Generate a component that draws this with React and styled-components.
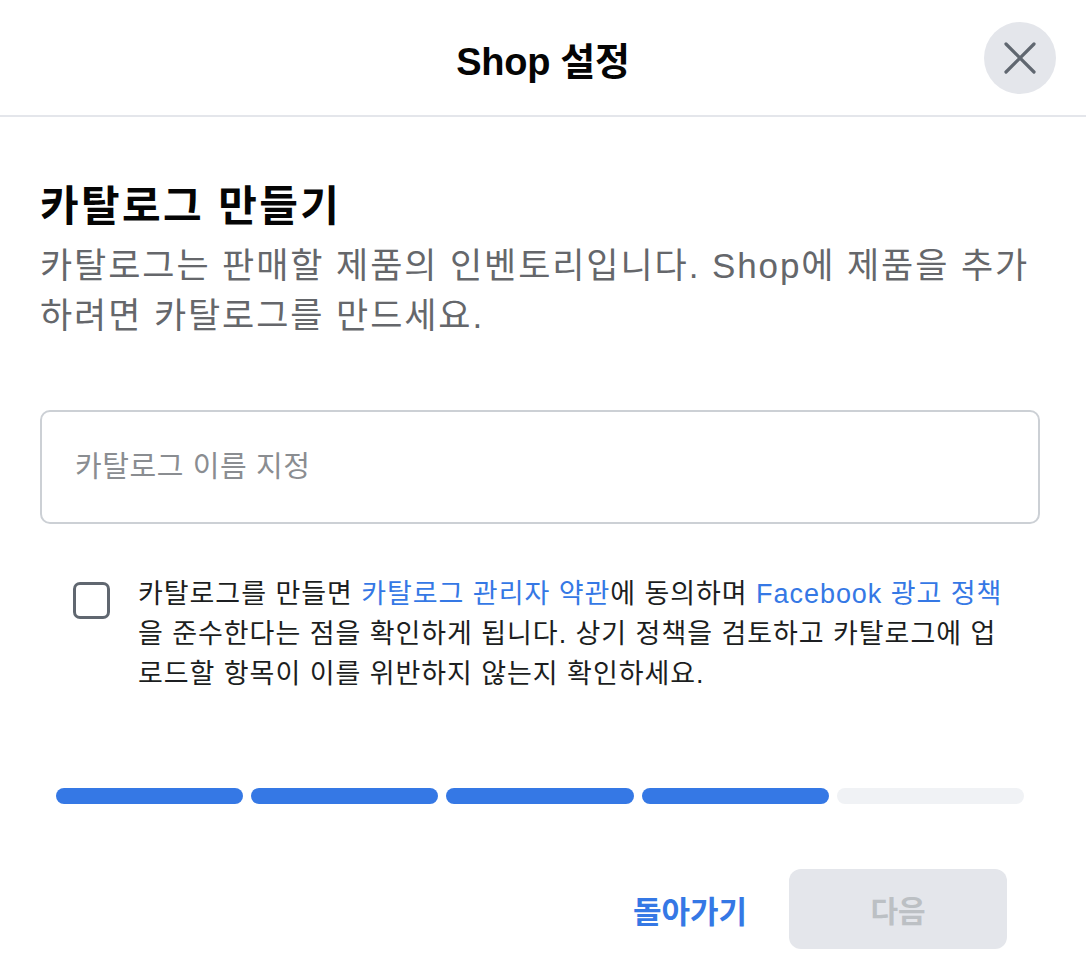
import styled, { createGlobalStyle } from 'styled-components';

const FONT = `"Liberation Sans", "Noto Sans CJK KR", sans-serif`;
const BLUE = '#3578e5';

const GlobalStyle = createGlobalStyle`
  body {
    margin: 0;
    background: #ffffff;
    font-family: ${FONT};
    -webkit-font-smoothing: antialiased;
  }
`;

const steps = [true, true, true, true, false];

function CloseIcon() {
  return (
    <svg width="32" height="32" viewBox="0 0 32 32" fill="none">
      <path
        d="M2 2 L30 30 M30 2 L2 30"
        stroke="#606770"
        strokeWidth="3.2"
        strokeLinecap="round"
      />
    </svg>
  );
}

export default function App() {
  return (
    <>
      <GlobalStyle />
      <Dialog>
        <Header>
          <span />
          <Title>Shop 설정</Title>
          <CloseButton type="button" aria-label="닫기">
            <CloseIcon />
          </CloseButton>
        </Header>

        <Body>
          <Heading>카탈로그 만들기</Heading>
          <Description>
            카탈로그는 판매할 제품의 인벤토리입니다. Shop에 제품을 추가
            <br />
            하려면 카탈로그를 만드세요.
          </Description>

          <NameInput placeholder="카탈로그 이름 지정" />

          <AgreeRow>
            <Checkbox type="button" aria-label="동의" />
            <AgreeText>
              카탈로그를 만들면 <Link>카탈로그 관리자 약관</Link>에 동의하며{' '}
              <Link>Facebook 광고 정책</Link>
              <br />을 준수한다는 점을 확인하게 됩니다. 상기 정책을 검토하고
              카탈로그에 업
              <br />
              로드할 항목이 이를 위반하지 않는지 확인하세요.
            </AgreeText>
          </AgreeRow>

          <Progress>
            {steps.map((done, i) => (
              <Step key={i} $done={done} />
            ))}
          </Progress>

          <Footer>
            <BackButton type="button">돌아가기</BackButton>
            <NextButton type="button" disabled>
              다음
            </NextButton>
          </Footer>
        </Body>
      </Dialog>
    </>
  );
}

const Dialog = styled.div`
  width: 1086px;
  min-height: 958px;
  background: #ffffff;
`;

const Header = styled.header`
  height: 117px;
  display: grid;
  grid-template-columns: 1fr auto 1fr;
  align-items: center;
  border-bottom: 2px solid #e4e6eb;
  box-sizing: border-box;
`;

const Title = styled.h1`
  margin: 0;
  font-size: 38px;
  font-weight: 700;
  color: #050505;
  letter-spacing: -0.3px;
  padding-top: 2px;
`;

const CloseButton = styled.button`
  justify-self: end;
  margin-right: 30px;
  width: 72px;
  height: 72px;
  border: none;
  border-radius: 50%;
  background: #e4e6eb;
  display: flex;
  align-items: center;
  justify-content: center;
  padding: 0;
  cursor: pointer;
`;

const Body = styled.main`
  padding: 66px 46px 0 40px;
`;

const Heading = styled.h2`
  margin: 0;
  font-size: 42px;
  line-height: 48px;
  font-weight: 700;
  letter-spacing: 2.4px;
  color: #050505;
`;

const Description = styled.p`
  margin: 10px 0 0;
  font-size: 35px;
  line-height: 50px;
  letter-spacing: 1.9px;
  color: #65676b;
  white-space: nowrap;
`;

const NameInput = styled.input`
  display: block;
  box-sizing: border-box;
  width: 1000px;
  height: 114px;
  margin-top: 69px;
  padding: 0 33px;
  border: 2px solid #ccd0d5;
  border-radius: 10px;
  font-family: ${FONT};
  font-size: 29px;
  letter-spacing: 0.6px;
  color: #050505;
  outline: none;

  &::placeholder {
    color: #8a8d91;
  }
`;

const AgreeRow = styled.div`
  display: flex;
  align-items: flex-start;
  gap: 28px;
  margin-top: 50px;
  padding-left: 33px;
`;

const Checkbox = styled.button`
  flex: none;
  width: 37px;
  height: 37px;
  margin-top: 8px;
  box-sizing: border-box;
  border: 3px solid #606770;
  border-radius: 7px;
  background: #ffffff;
  padding: 0;
`;

const AgreeText = styled.p`
  margin: 0;
  font-size: 27px;
  line-height: 40px;
  letter-spacing: 0.95px;
  color: #1c1e21;
  white-space: nowrap;
`;

const Link = styled.a`
  color: ${BLUE};
  cursor: pointer;
`;

const Progress = styled.div`
  display: flex;
  gap: 8px;
  margin: 94px 16px 0;
`;

const Step = styled.div`
  flex: 1;
  height: 16px;
  border-radius: 8px;
  background: ${(p) => (p.$done ? BLUE : '#f0f2f5')};
`;

const Footer = styled.div`
  display: flex;
  justify-content: flex-end;
  align-items: center;
  gap: 42px;
  margin-top: 65px;
  padding-right: 33px;
`;

const BackButton = styled.button`
  border: none;
  background: none;
  padding: 0;
  font-family: ${FONT};
  font-size: 31px;
  font-weight: 700;
  color: ${BLUE};
  cursor: pointer;
`;

const NextButton = styled.button`
  width: 218px;
  height: 80px;
  border: none;
  border-radius: 12px;
  background: #e4e6eb;
  font-family: ${FONT};
  font-size: 30px;
  font-weight: 700;
  color: #bcc0c4;
`;
